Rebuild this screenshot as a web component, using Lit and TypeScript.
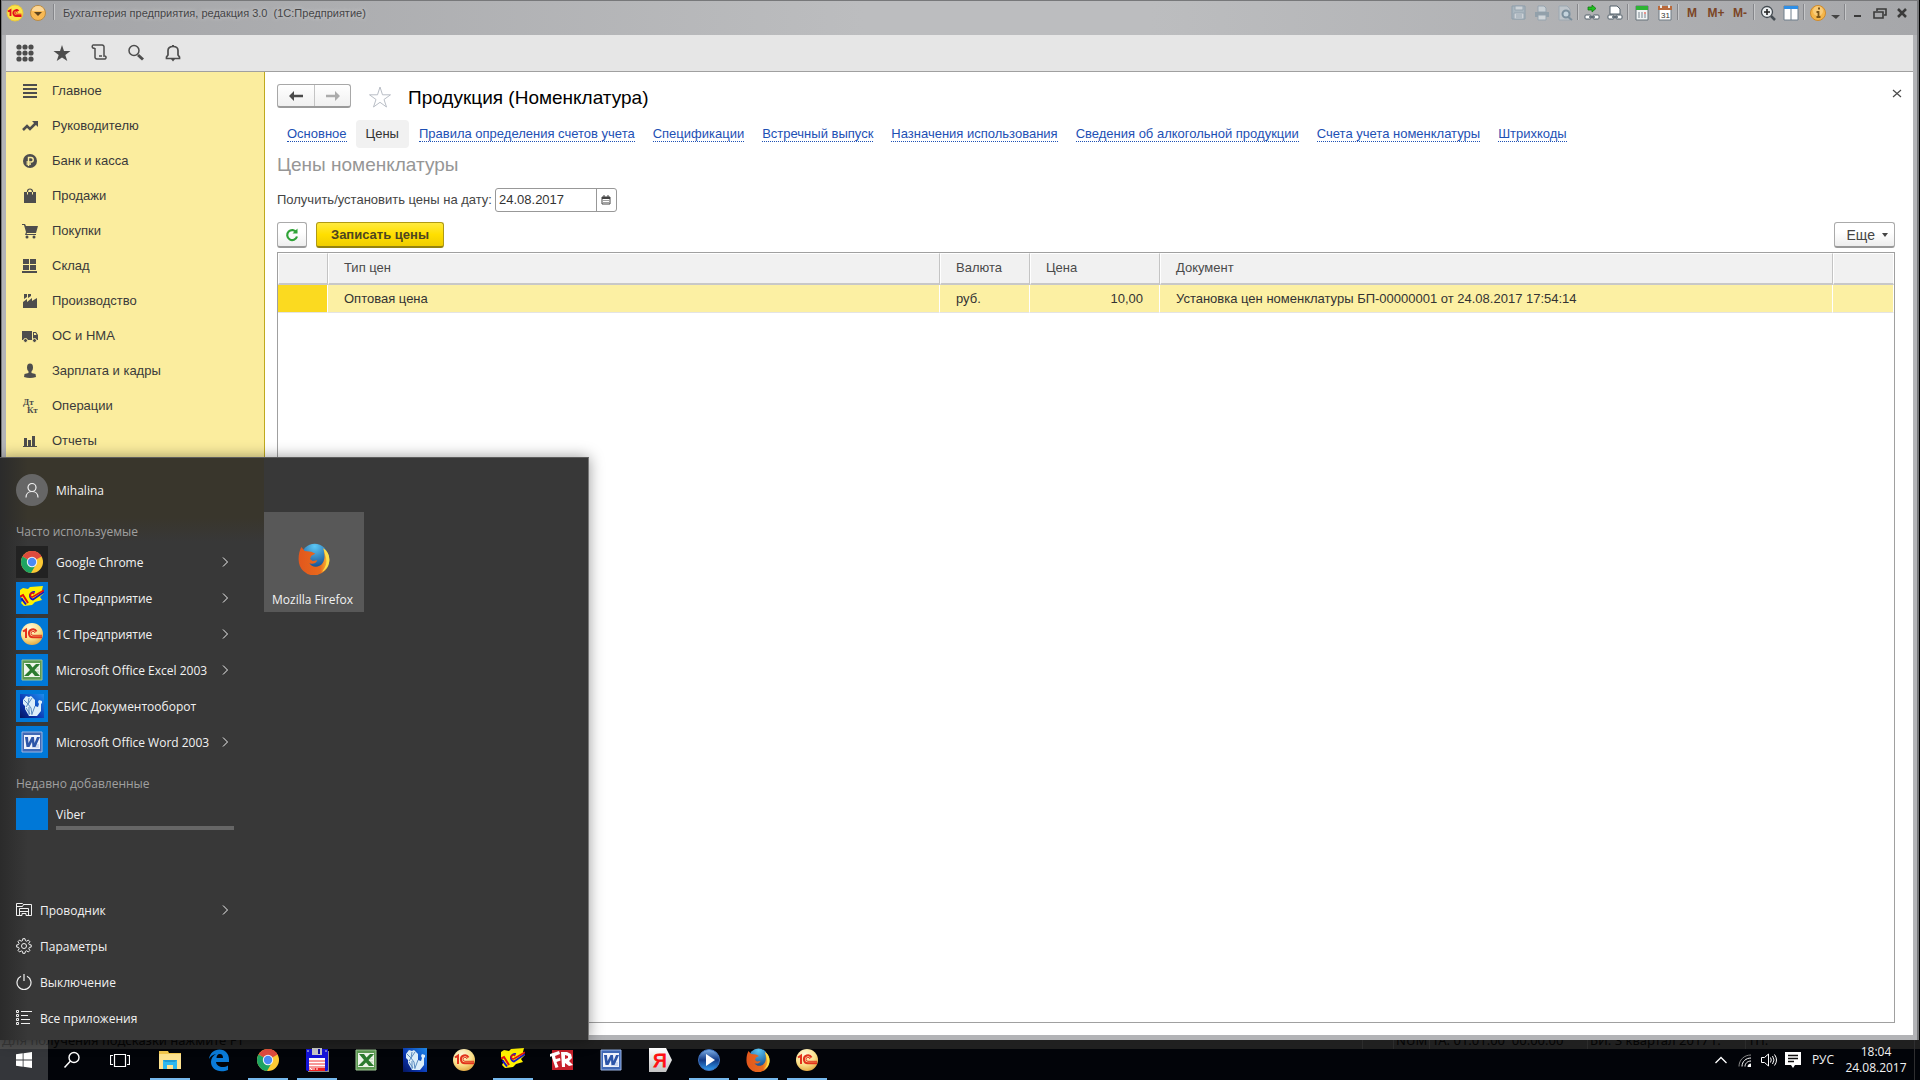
import { LitElement, html, css, svg, nothing, TemplateResult } from "lit";
import { customElement } from "lit/decorators.js";
import { classMap } from "lit/directives/class-map.js";

type Icon = TemplateResult;

const icon = (size: number, body: unknown, box = size): Icon =>
  html`<svg width=${size} height=${size} viewBox="0 0 ${box} ${box}" aria-hidden="true">${body}</svg>`;

/* ---------- Application logos (24 unit grid) ---------- */

const logos: Record<string, unknown> = {
  chrome: svg`
    <circle cx="12" cy="12" r="11" fill="#fcc934"/>
    <path d="M12 12 2.500 6.500A11 11 0 0 1 21.500 6.500Z" fill="#dd4b3e"/>
    <path d="M12 1a11 11 0 0 1 9.800 6H12Z" fill="#dd4b3e"/>
    <path d="M2.500 6.500A11 11 0 0 0 11 23l4.800-8.200L12 12Z" fill="#1da462"/>
    <circle cx="12" cy="12" r="5.200" fill="#f4f4f4"/>
    <circle cx="12" cy="12" r="4.200" fill="#4a8af4"/>`,
  onec: svg`
    <defs><radialGradient id="gold" cx=".4" cy=".25" r=".8">
      <stop offset="0" stop-color="#fff8d8"/><stop offset=".6" stop-color="#fbe08a"/><stop offset="1" stop-color="#e0a43c"/>
    </radialGradient></defs>
    <circle cx="12" cy="12" r="11" fill="url(#gold)"/>
    <path d="M3 9.500 6 7.500V16M16.500 9.500A4 4 0 1 0 12.800 15.300H22" fill="none" stroke="#e2331c" stroke-width="2"/>
    <path d="M15 11a2 2 0 1 0-2 2.300h9" fill="none" stroke="#e2331c" stroke-width="1"/>`,
  onec7: svg`
    <path d="M0 4 3 2 8 3 10 1 23 0 22 4 24 7 20 11 22 14 15 16 12 19 4 20 1 17 3 13 0 10Z" fill="#fff200"/>
    <path d="M0 10.500 3 9 8 17" fill="none" stroke="#e01010" stroke-width="2"/>
    <path d="M1.500 12.500 6 18.500" fill="none" stroke="#1414c8" stroke-width="2"/>
    <path d="M15 6a4 3.800 0 1 0-2 7.500L24 6" fill="none" stroke="#1414c8" stroke-width="1.800"/>
    <path d="M14 8a2 2 0 1 0-1.500 3L24 4.200" fill="none" stroke="#e01010" stroke-width="1.600"/>`,
  excel: svg`
    <path d="M2 2h20v20H2z" fill="#5c9a52" stroke="#9ec795"/>
    <path d="M4 5h16v14H4z" fill="#eef5ea"/>
    <path d="M14 8h5M14 11h5M14 14h5M14 17h5" stroke="#b3cfab"/>
    <path d="M5 6h5l2.500 3.500L16 6h4l-5.500 6L20 18h-5l-3-3.500L8.500 18H4l6-6Z" fill="#2c7b2f"/>`,
  word: svg`
    <path d="M2 2h20v20H2z" fill="#3f68b5" stroke="#9db6e4"/>
    <path d="M4 5h16v14H4z" fill="#eef2fb"/>
    <path d="M12 17h7M12 15h7" stroke="#a9bde4"/>
    <path d="M5 7h3l.5 6L11.500 7H14l.5 6L17 7h3l-4.500 10h-3L12 12l-2.500 5h-3Z" fill="#2c55a8"/>`,
  sbis: svg`
    <defs><linearGradient id="sea" x1="1" y1="0" x2="0" y2="1">
      <stop offset="0" stop-color="#1f8df0"/><stop offset=".6" stop-color="#0a35b0"/><stop offset="1" stop-color="#04155f"/>
    </linearGradient></defs>
    <path d="M0 0h24v24H0z" fill="url(#sea)"/>
    <path d="M3 6 6 2l3 1 2-1 4 4v6l3 1 1-3-1-2 1-2 3 1v2l-1 1v7l-4 5H9l-4-7 0-3-2-2Z" fill="#dceefa"/>
    <path d="M4 6l4 4 1-6M8 10l4-6M8 10l-2 3M8 10l3 4 1 7M9 21l0-8M15 12l-3 8M6 14l4 6" stroke="#5b8cc0" stroke-width="1" fill="none"/>`,
  explorer: svg`
    <path d="M1 3h9l1 2h12v16H1z" fill="#f3c84e"/>
    <path d="M1 6h22v15H1z" fill="#fde28f"/>
    <path d="M5 12h14v9h-4v-4H9v4H5z" fill="#2cb8ef"/>
    <path d="M5 12h14l-2 2H7z" fill="#1b9ad4"/>`,
  edge: svg`
    <path d="M2 11C3 5 7 1.500 12.500 1.500 18.500 1.500 22 6 22 11.500V14H9c.5 3.500 3.500 5 6.500 5 2 0 4-.5 5.500-1.500v4.500c-2 .8-4 1.300-6.500 1.300C8.500 23.300 4 19.500 4 14c0-3.500 2-6.300 5-8C5.500 6.500 3.500 8.500 2 11Zm7.500-1H16c0-2.500-1-4-3.200-4S9.500 8 9.500 10Z" fill="#0a7bd8"/>`,
  floppy: svg`
    <path d="M3 3h21v21H3z" fill="#8c8c8c"/><path d="M1 1h22v21l-1 1H2l-1-1z" fill="#1414d8"/>
    <path d="M7 0h10v7H7z" fill="#c8c8c8"/><path d="M13 1h2v5h-2z" fill="#1414a0"/><path d="M2 3h2M20 3h2" stroke="#ddd"/>
    <path d="M4 10h16v13H4z" fill="#fff"/>
    <path d="M4 13h16M4 16h16M4 19h16" stroke="#f03030" stroke-width="1"/><path d="M4 20h16v3H4z" fill="#f02020"/><path d="M5 22v-2l2 2v-2M9 22v-2M12 22v-2" stroke="#fff" fill="none"/>`,
  fr: svg`
    <path d="M2 2h21v20H2z" fill="#c7202b"/>
    <path d="M0 6 9 3l1 3-5 2 .8 3L10 10l.5 2.500-4 1.500 2 5-3 1-4-12L0 9ZM11 4h6l4 2 1 4-3 3 4 4-4 1-4-3v4h-3Zm4 3v4l3-1V8Z" fill="#fff"/>`,
  yandex: svg`
    <defs><linearGradient id="silver" x1="0" y1="0" x2="0" y2="1">
      <stop offset="0" stop-color="#fff"/><stop offset="1" stop-color="#c4c4c4"/></linearGradient></defs>
    <path d="M1 0h17l6 12-6 12H1z" fill="url(#silver)"/>
    <text x="5" y="19" font-family="Liberation Sans, sans-serif" font-size="19" fill="#ff1010" stroke="#ff1010">Я</text>`,
  player: svg`
    <defs><linearGradient id="orb" x1="0" y1="0" x2="0" y2="1">
      <stop offset="0" stop-color="#7fb2ea"/><stop offset=".5" stop-color="#123a86"/><stop offset="1" stop-color="#2f9cf0"/>
    </linearGradient></defs>
    <circle cx="12" cy="12" r="10.500" fill="url(#orb)" stroke="#3d6fb8"/>
    <path d="M9 6l9 6-9 6z" fill="#fff"/>`,
  firefox: svg`
    <defs><radialGradient id="globe" cx=".5" cy=".1" r=".9">
      <stop offset="0" stop-color="#5cc8f5"/><stop offset="1" stop-color="#0b3f86"/></radialGradient>
    <linearGradient id="fur" x1="0" y1="0" x2="1" y2="0">
      <stop offset="0" stop-color="#e2571d"/><stop offset=".7" stop-color="#e8691c"/><stop offset="1" stop-color="#fccb3b"/></linearGradient></defs>
    <circle cx="12.500" cy="10.500" r="10" fill="url(#globe)"/>
    <path d="M2.500 3 5 6l5 .5L13 8l-3 1.500L9 12l2 1.500 3.500-.5c-1 3-5 3-6 2 1.500 3.500 7.500 4 10 0 2-3 1.500-7 .5-11 3 2 4.500 5 4.500 8.500A11.500 11.500 0 0 1 .5 13C.3 9 1 6 2.500 3Z" fill="url(#fur)"/>
    <path d="M19 4c3 2 4.500 5 4.500 8.500 0 4-2.500 7.500-5.500 9 3-3.500 4-7 3-10.500Z" fill="#fde04a"/>`,
};
const logo = (name: string, size = 24) => icon(size, logos[name], 24);

/* ---------- 1C window icons (16 unit grid) ---------- */

const ink = "#4d4d4d";
const sections: { label: string; art: unknown }[] = [
  { label: "Главное", art: svg`<path d="M1 2h14M1 6h14M1 10h14M1 14h14" stroke=${ink} stroke-width="2"/>` },
  { label: "Руководителю", art: svg`<path d="m1 12 4-4 3 3 6-6" fill="none" stroke=${ink} stroke-width="2.500"/><path d="M10 3h6v6z" fill=${ink}/>` },
  { label: "Банк и касса", art: svg`<circle cx="8" cy="8" r="7" fill=${ink}/><path d="M6.500 13V4.500H9a2 2 0 0 1 0 4.500H4.500M4.500 11H9" fill="none" stroke="#fbed9e" stroke-width="1.400"/>` },
  { label: "Продажи", art: svg`<path d="M2 4h12v11H2z" fill=${ink}/><path d="M5.500 4V3.500a2.500 2.500 0 0 1 5 0V4" fill="none" stroke=${ink} stroke-width="1.200"/><path d="M5.500 4v2.500M10.500 4v2.500" stroke="#fbed9e"/>` },
  { label: "Покупки", art: svg`<path d="M0 1h3l1 2h12l-2 7H5l-.5 1H14v1H3l1-3L2 2H0z" fill=${ink}/><circle cx="5" cy="14" r="1.500" fill=${ink}/><circle cx="12" cy="14" r="1.500" fill=${ink}/>` },
  { label: "Склад", art: svg`<path d="M1 1h6v5H1zM8 1h6v5H8zM1 7h6v5H1zM8 7h6v5H8zM0 13h15v2H0z" fill=${ink}/>` },
  { label: "Производство", art: svg`<path d="M1 15V9l4-3v3l5-4v3l5-3v10zM2 1h3v3L2 6zM6 1h3v2L6 5z" fill=${ink}/>` },
  { label: "ОС и НМА", art: svg`<path d="M0 3h10v9H0zM11 4h3l2 3v5h-5z" fill=${ink}/><path d="M12 5h1.500l1 2H12z" fill="#fbed9e"/><circle cx="3.500" cy="12.500" r="2" fill=${ink} stroke="#fbed9e"/><circle cx="12.500" cy="12.500" r="2" fill=${ink} stroke="#fbed9e"/>` },
  { label: "Зарплата и кадры", art: svg`<ellipse cx="8" cy="4.500" rx="3" ry="4" fill=${ink}/><path d="M6.500 8h3v2l4 1 .5 3q-6 2-12 0l.5-3 4-1z" fill=${ink}/>` },
  { label: "Операции", art: svg`<text x="1" y="7" font-family="Liberation Serif, serif" font-weight="bold" font-size="9" fill=${ink}>Дт</text><text x="5" y="15" font-family="Liberation Serif, serif" font-weight="bold" font-size="9" fill=${ink}>Кт</text>` },
  { label: "Отчеты", art: svg`<path d="M2 5h3v8H2zM6 7h3v6H6zM10 3h3v10h-3zM1 13h14v1H1z" fill=${ink}/>` },
];

const tools: { label: string; art: unknown }[] = [
  { label: "Меню функций", art: svg`${[3, 9, 15].map((y) => [3, 9, 15].map((x) => svg`<circle cx=${x} cy=${y} r="2.600" fill=${ink}/>`))}` },
  { label: "Избранное", art: svg`<path d="m9 1 2 6h6.500l-5.200 4 2 6L9 13.400 3.700 17l2-6L.5 7H7z" fill=${ink}/>` },
  { label: "История", art: svg`<path d="M5 5V13.500A2 2 0 0 0 7 16h8a1.500 1.500 0 1 0-1-3V4.500A2 2 0 0 0 12 2H3a1.700 1.700 0 1 0 2 3M12 13H9" transform="translate(0 -1)" fill="none" stroke=${ink} stroke-width="1.500"/>` },
  { label: "Поиск", art: svg`<circle cx="7" cy="6.500" r="5" fill="none" stroke=${ink} stroke-width="1.500"/><path d="m11 11 5 4.500" stroke=${ink} stroke-width="3"/>` },
  { label: "Уведомления", art: svg`<path d="M2.500 14.500V13L4 11V6.500C4 4 6 2.500 9 2.500s5 1.500 5 4V11l1.500 2v1.500z" fill="none" stroke=${ink} stroke-width="1.700"/><path d="M8 1h2v2H8zM7 15h4l-2 2.500z" fill=${ink}/>` },
];

const sheet = "M3 1h7l3 3v5H3z";
type SystemItem = { label: string; art?: unknown; text?: string; cls?: string } | null;
const systemItems: SystemItem[] = [
  { label: "Сохранить", cls: "off", art: svg`<path d="M1 1h13v13H1z" fill="#a9b8c2" stroke="#8499a8"/><path d="M4 1h8v4H4zM3 8h10v6H3z" fill="#d5dbe0" stroke="#8fa1ae"/><path d="M5 10h6M5 12h6" stroke="#8fa1ae"/>` },
  { label: "Печать", cls: "off", art: svg`<path d="M4 1h6l2 2v4H4z" fill="#d0d8de" stroke="#8fa1ae"/><path d="M1 7h14v5H1z" fill="#8b9ca8"/><path d="M4 10h8v5H4z" fill="#d9dfe3" stroke="#8fa1ae"/>` },
  { label: "Просмотр", cls: "off", art: svg`<path d="M2 1h8l3 3v11H2z" fill="#c3cbd1" stroke="#98a7b2"/><circle cx="9" cy="9" r="3.500" fill="#c9dce8" stroke="#6f8798" stroke-width="2"/><path d="m11 12 4 3" stroke="#6f8798" stroke-width="2"/>` },
  null,
  { label: "Вставить ссылку", art: svg`<path d="M4 2h4V0l4 3.500L8 7V5H4z" fill="#20c020" stroke="#0c700c" stroke-width=".7"/><rect x="1" y="10" width="6" height="4" rx="1" fill="#fff" stroke="#53606b"/><rect x="9" y="10" width="6" height="4" rx="1" fill="#fff" stroke="#53606b"/><path d="M5 12h6" stroke="#53606b" stroke-width="1.500"/>` },
  { label: "Получить ссылку", art: svg`<path d=${sheet} fill="#fff" stroke="#53606b"/><rect x="1" y="10" width="6" height="4" rx="1" fill="#fff" stroke="#53606b"/><rect x="9" y="10" width="6" height="4" rx="1" fill="#fff" stroke="#53606b"/><path d="M5 12h6" stroke="#53606b" stroke-width="1.500"/>` },
  null,
  { label: "Калькулятор", art: svg`<path d="M2 1h12v14H2z" fill="#f0f3f4" stroke="#66727b"/><path d="M2 1h12v4H2z" fill="#2eb434"/><path d="M4 8h2M7 8h2M4 10h2M7 10h2M4 12h2M7 12h2M10 10h2M10 12h2" stroke="#76838c"/><path d="M10 8h2" stroke="#e03020"/>` },
  { label: "Календарь", art: svg`<path d="M2 2h12v13H2z" fill="#fff" stroke="#6f7b84"/><path d="M1 1h14v4H1z" fill="#b96a3c"/><path d="M4 0v3M12 0v3" stroke="#e8e8e8" stroke-width="2"/><text x="4" y="13" font-family="Liberation Sans, sans-serif" font-size="8" fill="#333">31</text>` },
  null,
  { label: "Память", text: "M", cls: "mem" },
  { label: "Прибавить", text: "M+", cls: "mem" },
  { label: "Вычесть", text: "M-", cls: "mem" },
  null,
  { label: "Масштаб", art: svg`<circle cx="7" cy="7" r="5.500" fill="#eef1f3" stroke="#454c52" stroke-width="1.300"/><path d="M4 7h6M7 4v6" stroke="#222" stroke-width="1.600"/><path d="m11 11 4 4" stroke="#454c52" stroke-width="2.500"/>` },
  { label: "Панели", art: svg`<path d="M1 1h14v14H1z" fill="#fff" stroke="#6f7f8c"/><path d="M1 1h14v3H1z" fill="#2f8fe6"/><path d="M8 4v11" stroke="#6f7f8c"/>` },
  null,
  { label: "О программе", art: svg`<circle cx="8" cy="8" r="7.500" fill="#f4b64a" stroke="#d08a2a"/><circle cx="8" cy="6" r="5" fill="#fbd48a" opacity=".7"/><path d="M8 3.500h2M6.500 7h2v5M6.500 12h4" stroke="#7a5418" stroke-width="1.800" fill="none"/>` },
  { label: "Еще команды", cls: "slim", art: svg`<path d="M1 8h9l-4 4z" fill="#444"/>` },
  null,
  { label: "Свернуть", cls: "win", art: svg`<path d="M4 11h7" stroke="#3a3a3a" stroke-width="2"/>` },
  { label: "Восстановить", cls: "win", art: svg`<path d="M5 6V4h9v6h-2M2 7h9v6H2z" fill="none" stroke="#3a3a3a" stroke-width="1.600"/>` },
  { label: "Закрыть", cls: "win", art: svg`<path d="m4 4 8 8M12 4l-8 8" stroke="#3a3a3a" stroke-width="2.500"/>` },
];

const tabs = [
  "Основное", "Цены", "Правила определения счетов учета", "Спецификации", "Встречный выпуск",
  "Назначения использования", "Сведения об алкогольной продукции", "Счета учета номенклатуры", "Штрихкоды",
];

@customElement("enterprise-window")
class EnterpriseWindow extends LitElement {
  static styles = css`
    :host {
      display: flex; flex-direction: column; min-height: 0;
      background: #b2b3b6; border: solid #77787a; border-width: 1px 2px 0 1px;
      font: 13px/16px "Liberation Sans", Arial, sans-serif; color: #333;
    }
    button, input { font: inherit; color: inherit; }
    button { padding: 0; border: 0; background: none; display: flex; align-items: center; justify-content: center; }
    svg { display: block; flex: none; }
    .titlebar {
      display: flex; align-items: center; height: 24px; padding: 0 4px 10px;
      background: linear-gradient(90deg, #a3a4a7, #bcbdbf 45%, #bcbdbf 60%, #a6a7aa);
    }
    .badge { width: 18px; height: 24px; }
    .badge + .badge { margin-left: 5px; }
    .split { width: 4px; height: 18px; flex: none; }
    .split::before { content: ""; display: block; width: 1px; height: 16px; margin-left: 1px; background: #85868a; border-right: 1px solid #c6c7c9; }
    .first { margin-left: 5px; }
    .caption { font-size: 11px; line-height: 24px; color: #454547; margin: 0 auto 0 7px; white-space: pre; text-shadow: 0 0 4px #d8d8d8; }
    .sys { width: 23px; height: 24px; }
    .mem { width: 24px; font-weight: bold; font-size: 12px; color: #7b4526; }
    .slim { width: 14px; }
    .win { width: 22px; }
    .off { opacity: .8; }
    .frame { flex: 1; display: flex; flex-direction: column; margin: 0 4px 5px; background: #fff; min-height: 0; }
    .toolbar { display: flex; height: 36px; background: #e6e6e6; border-bottom: 1px solid #a0a0a0; }
    .toolbar button { width: 37px; }
    .body { flex: 1; display: flex; min-height: 0; }
    .sections { width: 258px; flex: none; padding-top: 1px; background: #fbed9e; border-right: 1px solid #bfa91f; }
    .sections a { display: flex; align-items: center; gap: 14px; height: 35px; padding-left: 16px; color: #3a3a3a; text-decoration: none; }
    .page { flex: 1; min-width: 0; display: flex; flex-direction: column; padding: 12px 18px 12px 12px; }
    .head { display: flex; align-items: flex-start; height: 26px; margin-bottom: 10px; }
    .history { display: flex; height: 21px; border: 1px solid #a8a8a8; border-bottom: 2px solid #9a9a9a; border-radius: 3px; background: linear-gradient(#fff, #f0f0f0); }
    .history button { width: 36px; }
    .history button + button { border-left: 1px solid #c4c4c4; }
    .fav { margin: 0 15px 0 16px; }
    h1 { font-size: 19px; line-height: 28px; font-weight: normal; color: #000; margin: 0 auto 0 0; }
    .close { width: 16px; height: 18px; margin-right: -10px; }
    .tabs { display: flex; height: 28px; align-items: center; padding-left: 1px; }
    .tabs a { padding: 6px 9px; color: #1d50b4; text-decoration: none; white-space: nowrap; }
    .tabs span { border-bottom: 1px dotted #1d50b4; }
    .tabs .current { background: #f1f1f1; border-radius: 4px; color: #333; padding: 6px 10px; margin-right: 1px; }
    .tabs .current span { border: 0; }
    h2 { font-size: 19px; line-height: 26px; font-weight: normal; color: #969696; margin: 4px 0 10px; }
    .field { display: flex; align-items: center; gap: 3px; height: 24px; margin-bottom: 10px; color: #444; }
    .date { display: flex; height: 22px; border: 1px solid #989898; border-radius: 3px; background: #fff; }
    .date input { width: 97px; border: 0; padding: 0 0 0 3px; background: none; outline: 0; color: #333; }
    .date button { width: 20px; border-left: 1px solid #989898; }
    .commands { display: flex; justify-content: space-between; height: 26px; margin-bottom: 4px; }
    .group { display: flex; gap: 9px; }
    .btn { box-sizing: border-box; height: 26px; border: 1px solid #aaa; border-bottom: 2px solid #999; border-radius: 3px; background: linear-gradient(#fff 40%, #eee); color: #444; }
    .refresh { width: 30px; }
    .primary { padding: 0 14px; font-weight: bold; border-color: #b09a14; border-bottom-color: #94820f; background: linear-gradient(#ffea40, #ffdf00 50%, #f0cd00); color: #4d4520; }
    .more { padding: 0 6px 0 12px; gap: 7px; font-size: 14px; }
    .list { flex: 1; border: 1px solid #a0a0a0; background: #fff; }
    table { width: 100%; table-layout: fixed; border-collapse: separate; border-spacing: 0; }
    th, td { box-sizing: border-box; text-align: left; font-weight: normal; padding: 0 16px; white-space: nowrap; }
    th { height: 32px; padding-bottom: 2px; background: #f1f1f1; color: #4a4a4a; border: 1px solid #fff; border-right-color: #c4c4c4; border-bottom: 2px solid #c8c8c8; }
    th:last-child { border-right-color: #fff; }
    th:not(:first-child) { padding-left: 15px; }
    td { height: 28px; padding-top: 1px; background: #fcf0a3; color: #333; border-right: 1px solid #fff; border-bottom: 1px solid #e4e4e4; }
    td.mark { background: #fbda20; }
    .num { text-align: right; }
    .c-mark { width: 50px; } .c-cur { width: 90px; } .c-price { width: 130px; } .c-doc { width: 673px; } .c-end { width: 61px; }
  `;

  render() {
    return html`
      <header class="titlebar">
        <button class="badge" aria-label="Меню окна">${icon(18, svg`
          <circle cx="9" cy="9" r="8" fill="#fbe34a" stroke="#e9c63a"/>
          <path d="M2 7.500 4.500 6v6M12.500 7a3 3 0 1 0-2.500 5h5.500" fill="none" stroke="#e3101c" stroke-width="1.800"/><path d="M11.500 8.500a1.300 1.300 0 1 0-1 1.700h5" fill="none" stroke="#e3101c"/>`)}</button>
        <button class="badge" aria-label="Главное меню">${icon(18, svg`<circle cx="9" cy="9" r="7.500" fill="#f8b954" stroke="#b98b45"/><path d="M3 7a6 5 0 0 1 12 0z" fill="#fcd796"/><path d="M5 8h8l-4 4z" fill="#5e451e"/>`)}</button>
        <span class="split first"></span>
        <span class="caption">Бухгалтерия предприятия, редакция 3.0  (1С:Предприятие)</span>
        ${systemItems.map((it) => it === null
          ? html`<span class="split"></span>`
          : html`<button class="sys ${it.cls ?? ""}" aria-label=${it.label}>${it.text ?? icon(it.cls === "slim" ? 12 : 16, it.art, it.cls === "slim" ? 12 : 16)}</button>`)}
      </header>
      <div class="frame">
        <div class="toolbar">${tools.map((t) => html`<button aria-label=${t.label}>${icon(18, t.art)}</button>`)}</div>
        <div class="body">
          <nav class="sections">${sections.map((s) => html`<a href="#">${icon(16, s.art)}${s.label}</a>`)}</nav>
          <main class="page">
            <div class="head">
              <div class="history">
                <button aria-label="Назад">${icon(16, svg`<path d="M1 8 6 3v3.800h9v2.400H6V13z" fill="#4a4a4a"/>`)}</button>
                <button aria-label="Вперед">${icon(16, svg`<path d="m15 8-5-5v3.800H1v2.400h9V13z" fill="#ababab"/>`)}</button>
              </div>
              <button class="fav" aria-label="В избранное">${icon(26, svg`<path d="m13 3 2.500 7.800h8l-6.500 4.700L19.500 23 13 18.300 6.500 23 9 15.500l-6.500-4.700h8z" fill="#fff" stroke="#b9bec6"/>`)}</button>
              <h1>Продукция (Номенклатура)</h1>
              <button class="close" aria-label="Закрыть форму">${icon(16, svg`<path d="m4 5 8 7M12 5l-8 7" stroke="#4a4a4a" stroke-width="1.200"/>`)}</button>
            </div>
            <nav class="tabs">${tabs.map((t, i) => html`<a href="#" class=${classMap({ current: i === 1 })}><span>${t}</span></a>`)}</nav>
            <h2>Цены номенклатуры</h2>
            <div class="field">
              <label for="date">Получить/установить цены на дату:</label>
              <div class="date">
                <input id="date" type="text" value="24.08.2017">
                <button aria-label="Выбрать дату">${icon(10, svg`<path d="M1 2h8v7H1z" fill="#fff" stroke="#444"/><path d="M1 2h8v2H1z" fill="#444"/><path d="M3 0v2M7 0v2" stroke="#444"/><path d="M2.500 5.500h5M2.500 7.500h5" stroke="#444" stroke-dasharray="1 1"/>`)}</button>
              </div>
            </div>
            <div class="commands">
              <div class="group">
                <button class="btn refresh" aria-label="Обновить">${icon(16, svg`<path d="M12.500 5.500A5 5 0 1 0 13 9.500" fill="none" stroke="#2fa336" stroke-width="2.200"/><path d="M8.500 6.500h5V1.500z" fill="#2fa336"/>`)}</button>
                <button class="btn primary">Записать цены</button>
              </div>
              <button class="btn more">Еще ${icon(6, svg`<path d="M0 1h6L3 5z" fill="#444"/>`)}</button>
            </div>
            <div class="list">
              <table>
                <colgroup><col class="c-mark"><col><col class="c-cur"><col class="c-price"><col class="c-doc"><col class="c-end"></colgroup>
                <thead><tr><th></th><th>Тип цен</th><th>Валюта</th><th>Цена</th><th>Документ</th><th></th></tr></thead>
                <tbody><tr><td class="mark"></td><td>Оптовая цена</td><td>руб.</td><td class="num">10,00</td><td>Установка цен номенклатуры БП-00000001 от 24.08.2017 17:54:14</td><td></td></tr></tbody>
              </table>
            </div>
          </main>
        </div>
      </div>`;
  }
}

const frequent = [
  { name: "Google Chrome", logo: "chrome", more: true },
  { name: "1С Предприятие", logo: "onec7", more: true },
  { name: "1С Предприятие", logo: "onec", more: true },
  { name: "Microsoft Office Excel 2003", logo: "excel", more: true },
  { name: "СБИС Документооборот", logo: "sbis", more: false },
  { name: "Microsoft Office Word 2003", logo: "word", more: true },
];

const line = (d: string) => svg`<path d=${d} fill="none" stroke="#f0f0f0"/>`;
const places = [
  { name: "Проводник", more: true, art: line("M3 13.500H.5V1.500h6l1 1h8v11H13M.5 4.500h6l1-2M3.500 14V6.500h9V14M3.500 9.500h9M3.500 13.500H6V11.500h4v2h2.500") },
  { name: "Параметры", more: false, art: svg`<circle cx="8" cy="8" r="2.500" fill="none" stroke="#f0f0f0"/><path d="m6.800.7-.3 1.900-1.300.6L3.500 2.100 2 3.700l1.100 1.600-.5 1.300-1.900.3v2.200l1.900.3.6 1.400L2 12.400 3.600 14l1.600-1.100 1.300.5.300 1.900H9l.4-1.900 1.300-.6 1.600 1.200 1.600-1.600-1.100-1.600.5-1.400 1.900-.3V6.900l-1.900-.3-.6-1.300L13.900 3.700l-1.600-1.600-1.600 1.100-1.300-.6L9 .7z" fill="none" stroke="#f0f0f0"/>` },
  { name: "Выключение", more: false, art: svg`<path d="M5 2.300a7 7 0 1 0 6 0M8 0v7" fill="none" stroke="#f0f0f0" stroke-width="1.200"/>` },
  { name: "Все приложения", more: false, art: line("M.5.5h2v2h-2zM.5 4.500h2v2h-2zM.5 8.500h2v2h-2zM.5 12.500h2v2h-2zM5 1.500h11M5 5.500h7M5 9.500h9M5 13.500h9") },
];

@customElement("start-menu")
class StartMenu extends LitElement {
  static styles = css`
    :host {
      display: flex; box-sizing: border-box; width: 589px; padding: 16px 0 4px 16px; color: #f2f2f2;
      font: 12px/16px "Open Sans", "Segoe UI", sans-serif;
      background:
        linear-gradient(90deg, #2b2b2b, #38383800 28px),
        linear-gradient(#39362c 60px, #39362c00 84px) 0 0 / 264px 84px no-repeat,
        #383838;
      border-top: 1px solid #5c5c5c; border-right: 1px solid #777;
      box-shadow: 0 0 14px #0006;
    }
    svg { display: block; flex: none; }
    .column { width: 248px; }
    .user, .entry { display: flex; align-items: center; width: 232px; padding: 0; border: 0; background: none; color: inherit; font: inherit; text-align: left; text-decoration: none; }
    .user, .apps .entry { height: 32px; gap: 8px; }
    .avatar { width: 32px; height: 32px; border-radius: 50%; background: #666; display: grid; place-items: center; }
    h2 { font: inherit; color: #a0a0a0; margin: 18px 0 6px; }
    .apps { display: flex; flex-direction: column; gap: 4px; }
    .square { width: 32px; height: 32px; flex: none; display: grid; place-items: center; background: #0078d7; }
    .dark { background: #222; }
    .name { flex: 1; white-space: nowrap; }
    .name, .user-name { padding-top: 2px; }
    .arrow { margin-right: 18px; }
    .places { margin-top: 62px; }
    .places .entry { height: 36px; gap: 8px; }
    .installing { flex: 1; align-self: stretch; display: flex; flex-direction: column; justify-content: space-between; padding-top: 9px; }
    .progress { height: 4px; width: 178px; background: #666; }
    .tile { display: flex; flex-direction: column; justify-content: space-between; align-items: center; box-sizing: border-box; width: 100px; height: 100px; margin-top: 38px; padding: 31px 8px 4px; background: #585858; color: inherit; text-decoration: none; }
    .tile span { white-space: nowrap; align-self: flex-start; }
  `;

  private entry(name: string, art: unknown, more: boolean) {
    return html`<button class="entry">${art}<span class="name">${name}</span>${more
      ? html`<span class="arrow">${icon(10, line("m3 .5 4.500 4.500-4.500 4.500"))}</span>` : nothing}</button>`;
  }

  render() {
    return html`
      <div class="column">
        <button class="user"><span class="avatar">${icon(16, svg`<circle cx="8" cy="5.500" r="4" fill="none" stroke="#f0f0f0" stroke-width="1.200"/><path d="M2 15.500C2 12 4.500 9.500 8 9.500s6 2.500 6 6" fill="none" stroke="#f0f0f0" stroke-width="1.200"/>`)}</span><span class="user-name">Mihalina</span></button>
        <h2>Часто используемые</h2>
        <div class="apps">${frequent.map((f) => this.entry(
          f.name, html`<span class="square ${f.logo === "chrome" ? "dark" : ""}">${logo(f.logo)}</span>`, f.more))}</div>
        <h2>Недавно добавленные</h2>
        <div class="apps"><button class="entry"><span class="square"></span><span class="installing">Viber<span class="progress"></span></span></button></div>
        <div class="places">${places.map((p) => this.entry(p.name, icon(16, p.art), p.more))}</div>
      </div>
      <a class="tile" href="#">${logo("firefox", 32)}<span>Mozilla Firefox</span></a>`;
  }
}

const pinned = [
  { logo: "explorer", name: "Проводник", open: true }, { logo: "edge", name: "Edge", open: false },
  { logo: "chrome", name: "Chrome", open: true }, { logo: "floppy", name: "Total Commander", open: true },
  { logo: "excel", name: "Excel", open: false }, { logo: "sbis", name: "СБИС", open: false },
  { logo: "onec", name: "1С", open: false }, { logo: "onec7", name: "1С 7", open: true },
  { logo: "fr", name: "FR", open: false }, { logo: "word", name: "Word", open: false },
  { logo: "yandex", name: "Яндекс", open: false }, { logo: "player", name: "Плеер", open: true },
  { logo: "firefox", name: "Firefox", open: true }, { logo: "onec", name: "1С", open: true },
];

@customElement("task-bar")
class TaskBar extends LitElement {
  static styles = css`
    :host { display: block; position: relative; height: 40px; background: #020409; color: #f2f2f2; font: 12px/16px "Open Sans", "Segoe UI", sans-serif; overflow: hidden; }
    svg { display: block; flex: none; }
    .behind { position: absolute; inset: 0 0 auto; display: flex; height: 9px; background: #202020; color: #050505; font: 13px/16px "Noto Sans", Tahoma, sans-serif; overflow: hidden; white-space: pre; }
    .behind span { margin-top: -8px; padding-left: 2px; border-left: 1px solid #2c2c2c; }
    .behind .hint { flex: 1; border: 0; }
    .cell-s { width: 28px; } .cell-n { width: 33px; } .cell-l { width: 155px; } .cell-e { width: 172px; }
    .bar { position: relative; display: flex; height: 40px; }
    button { position: relative; display: grid; place-items: center; width: 48px; height: 40px; padding: 0; border: 0; background: none; color: inherit; font: inherit; }
    .start { background: #fff3; }
    .apps { display: flex; gap: 1px; margin: 0 auto 0 2px; }
    .open { border-bottom: 2px solid #76b9ed; padding-top: 2px; width: 40px; margin: 0 4px; }
    .tray { display: flex; align-items: center; padding-right: 3px; border-right: 1px solid #2e2e30; margin-right: 5px; }
    .tray button { width: 24px; }
    .tray .lang { width: 36px; }
    .tray .clock { width: 70px; text-align: center; }
  `;

  render() {
    return html`
      <div class="behind" aria-hidden="true">
        <span class="hint">Для получения подсказки нажмите F1</span><span class="cell-s"></span><span class="cell-n">NUM</span>
        <span class="cell-l">ТА: 01.01.00  00:00:00</span><span class="cell-l">БИ: 3 квартал 2017 г.</span><span class="cell-e">ТП:</span>
      </div>
      <div class="bar">
        <button class="start" aria-label="Пуск">${icon(16, svg`<path d="M0 2.300 6.700 1.300v6.300H0zM7.500 1.200 16 0v7.600H7.500zM0 8.400h6.700v6.300L0 13.700zM7.500 8.400H16V16l-8.500-1.200z" fill="#fff"/>`)}</button>
        <button aria-label="Поиск">${icon(18, svg`<circle cx="11" cy="6.500" r="5" fill="none" stroke="#fff" stroke-width="1.400"/><path d="m7.500 10-6 6.500" stroke="#fff" stroke-width="1.500"/>`)}</button>
        <button aria-label="Представление задач">${icon(20, svg`<path d="M4.500 4.500h11v12h-11zM3 5.500H.5v9H3M17 5.500h2.500v9H17" fill="none" stroke="#fff" stroke-width="1.200"/>`)}</button>
        <div class="apps">${pinned.map((p) => html`<button class=${classMap({ open: p.open })} aria-label=${p.name}>${logo(p.logo)}</button>`)}</div>
        <div class="tray">
          <button aria-label="Скрытые значки">${icon(14, svg`<path d="m1.500 10 5.500-5.500L12.500 10" fill="none" stroke="#fff" stroke-width="1.300"/>`)}</button>
          <button aria-label="Сеть">${icon(16, svg`<path d="M2 14.500C2 8 7 3 14 3" fill="none" stroke="#888"/><path d="M5 14.500C5 9.500 9 6 14 6M8 14.500C8 11.500 10.500 9 14 9" fill="none" stroke="#fff"/><path d="M10.500 15c0-2 1.500-3.500 3.500-3.500V15z" fill="#fff"/>`)}</button>
          <button aria-label="Громкость">${icon(18, svg`<path d="M1.500 6.500h3l4-3.500v12l-4-3.500h-3zM10.500 6.500q1.500 2.500 0 5M12.500 5q3 4 0 8M14.500 3.500q4 5.500 0 11" fill="none" stroke="#fff"/>`)}</button>
          <button aria-label="Уведомления">${icon(18, svg`<path d="M1 1h16v13h-6l-2 3-2-3H1z" fill="#fff"/><path d="M4 4.500h10M4 7.500h10M4 10.500h6" stroke="#111" stroke-width="1.300"/>`)}</button>
          <button class="lang">РУС</button>
          <button class="clock"><span>18:04<br>24.08.2017</span></button>
        </div>
      </div>`;
  }
}

@customElement("app-root")
class AppRoot extends LitElement {
  static styles = css`
    :host { display: grid; grid-template-rows: 1fr auto; position: relative; min-height: 100vh; background: #000; overflow: hidden; }
    enterprise-window { margin: 0 1px; }
    start-menu { position: absolute; left: 0; bottom: 40px; }
  `;
  render() {
    return html`<enterprise-window></enterprise-window><task-bar></task-bar><start-menu></start-menu>`;
  }
}
